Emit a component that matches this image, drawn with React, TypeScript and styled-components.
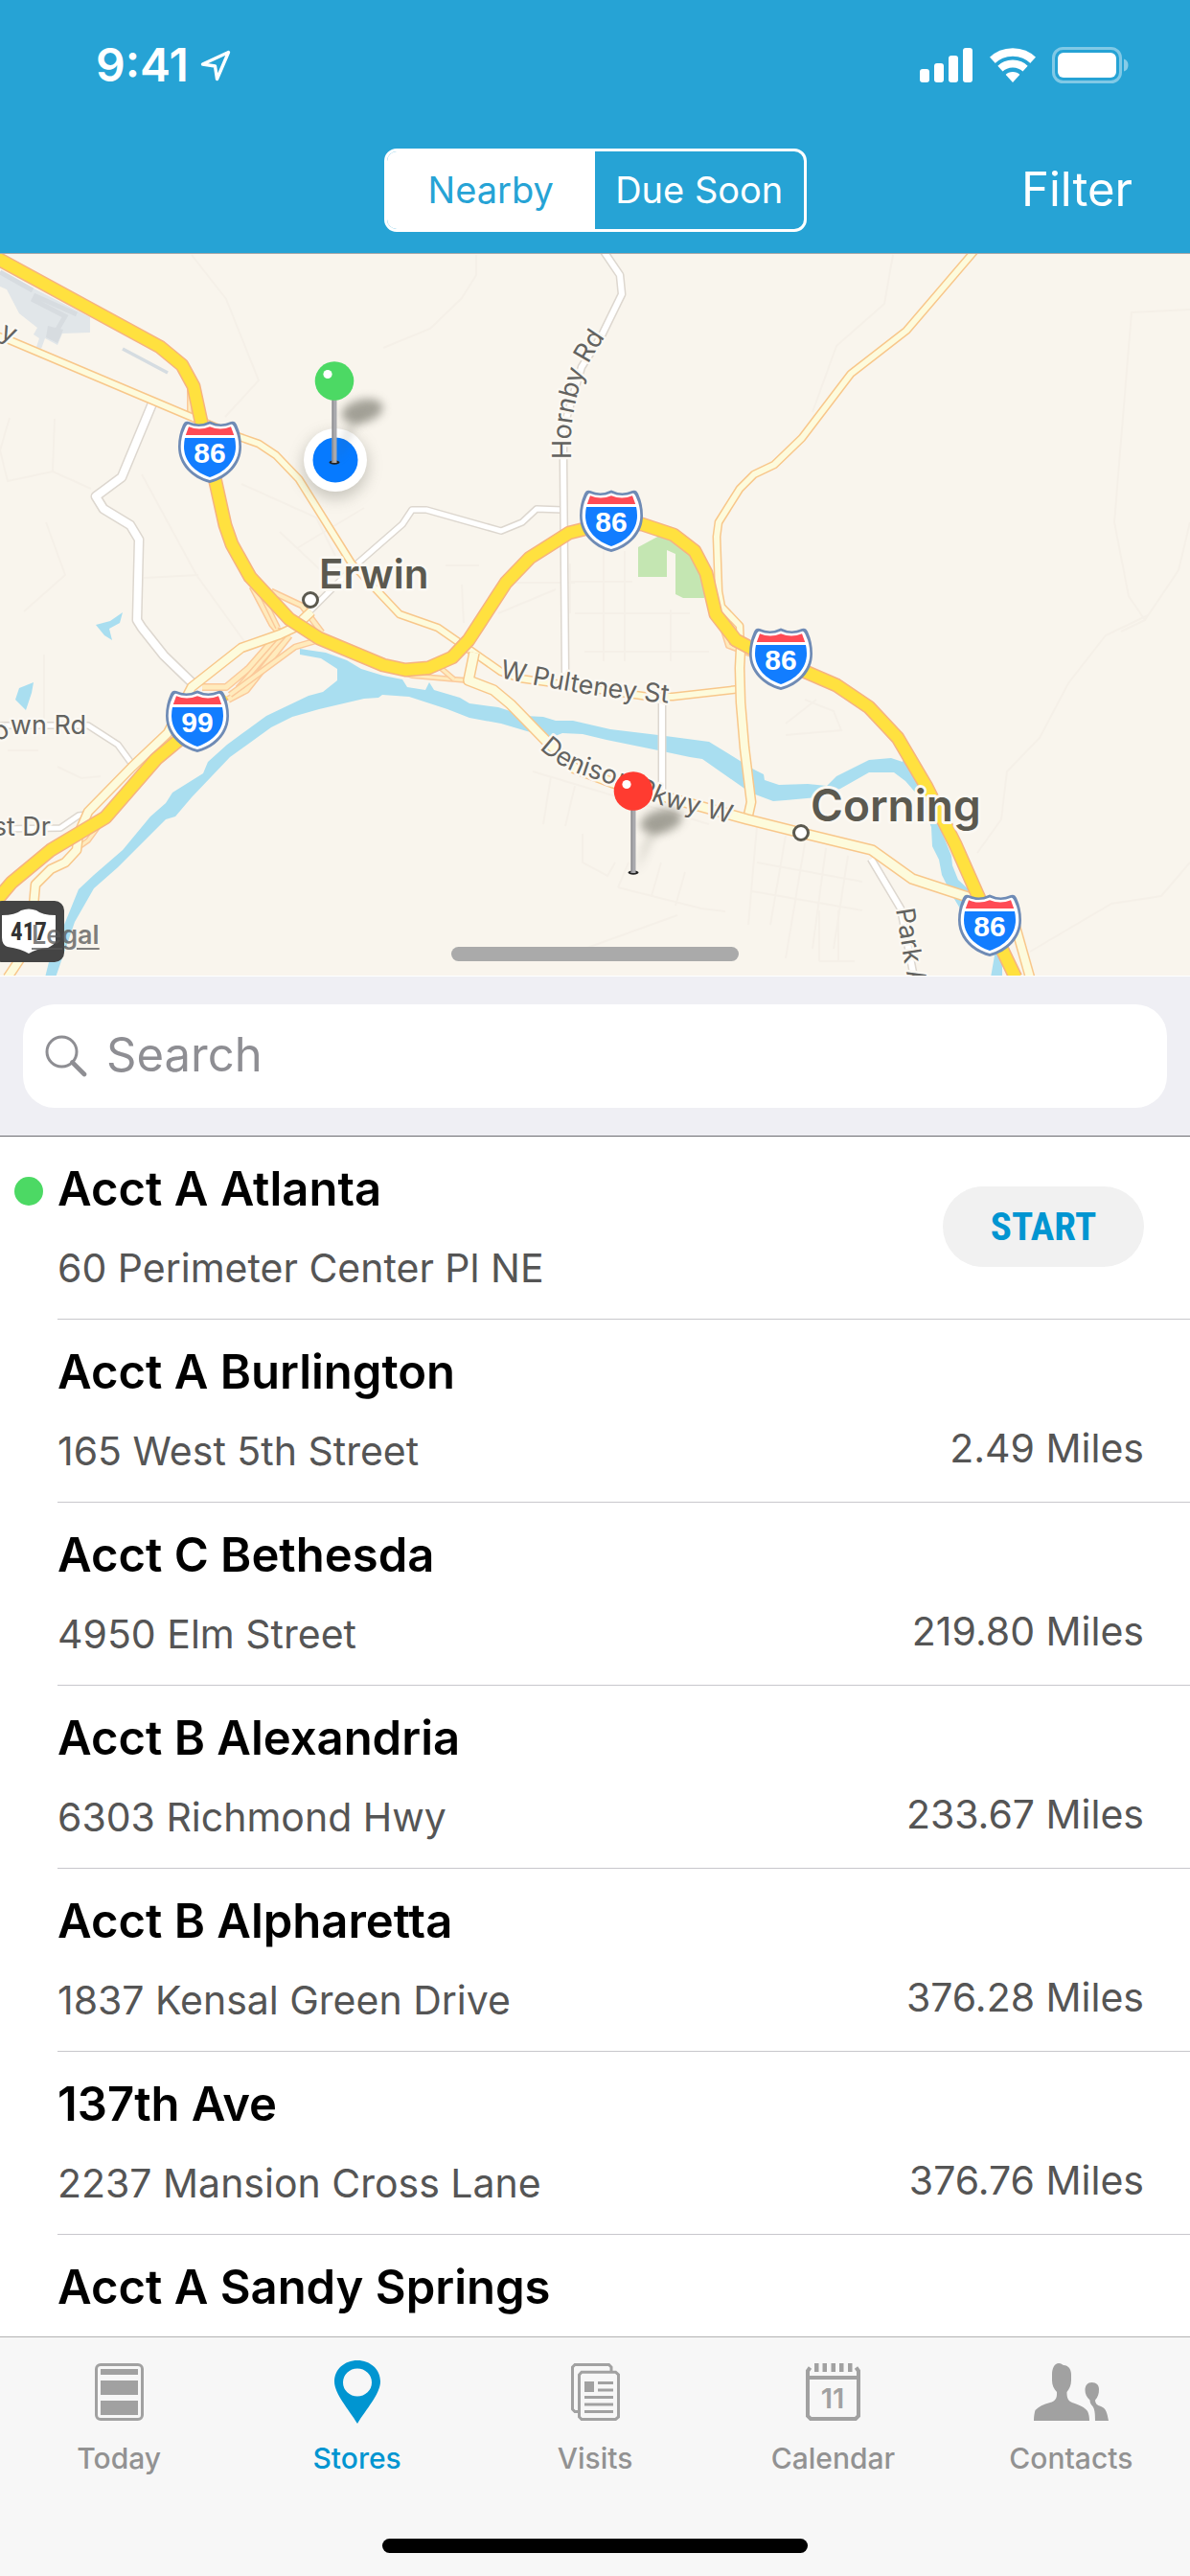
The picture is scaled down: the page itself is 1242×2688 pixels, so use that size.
import React, { useState } from "react";
import styled, { createGlobalStyle } from "styled-components";

const GlobalStyle = createGlobalStyle`
  *, *::before, *::after { box-sizing: border-box; }
  body {
    margin: 0;
    background: #fff;
    font-family: Inter, Roboto, "Liberation Sans", sans-serif;
    -webkit-font-smoothing: antialiased;
  }
  button, input { font: inherit; }
`;

const Screen = styled.div`
  display: flex;
  flex-direction: column;
  height: 100vh;
  min-height: 1600px;
  overflow: hidden;
`;

/* ---------- header ---------- */

const Header = styled.header`
  flex: none;
  background: #26a3d5;
  color: #fff;
`;

const StatusBar = styled.div`
  display: flex;
  align-items: center;
  justify-content: space-between;
  height: 132px;
  padding: 4px 64px 0 100px;
`;

const StatusGroup = styled.div<{ $gap: number }>`
  display: flex;
  align-items: center;
  gap: ${(p) => p.$gap}px;
`;

const Clock = styled.span`
  font-size: 48px;
  line-height: 60px;
  font-weight: 600;
`;

const NavBar = styled.div`
  display: grid;
  grid-template-columns: 1fr auto 1fr;
  align-items: center;
  height: 132px;
  padding: 0 60px;
`;

const Segmented = styled.div`
  grid-column: 2;
  display: flex;
  width: 441px;
  height: 87px;
  border: 3px solid #fff;
  border-radius: 13px;
  overflow: hidden;
`;

const Segment = styled.button<{ $active: boolean }>`
  flex: 1;
  padding: 0;
  border: 0;
  background: ${(p) => (p.$active ? "#fff" : "transparent")};
  color: ${(p) => (p.$active ? "#26a3d5" : "#fff")};
  font-size: 38px;
  white-space: nowrap;
`;

const FilterButton = styled.button`
  justify-self: end;
  padding: 0;
  border: 0;
  background: none;
  color: #fff;
  font-size: 49px;
  line-height: 60px;
`;

/* ---------- map ---------- */

const MapPanel = styled.section`
  position: relative;
  flex: none;
  border-bottom: 1px solid #fff;
`;

const MapCanvas = styled.svg`
  display: block;
  width: 100%;
  height: auto;
`;

const LegalLink = styled.a`
  position: absolute;
  left: 33px;
  bottom: 26px;
  color: rgba(85, 85, 85, 0.75);
  font-size: 27px;
  line-height: 32px;
  font-weight: 600;
  text-underline-offset: 4px;
`;

const Grabber = styled.div`
  position: absolute;
  left: 50%;
  bottom: 15px;
  width: 300px;
  height: 15px;
  margin-left: -150px;
  border-radius: 8px;
  background: #aaa;
`;

/* ---------- search ---------- */

const SearchBar = styled.form`
  flex: none;
  padding: 29px 24px;
  background: #efeff4;
  border-bottom: 1px solid #6c6c70;
`;

const SearchField = styled.label`
  display: flex;
  align-items: center;
  gap: 20px;
  height: 108px;
  padding: 0 22px 2px;
  border-radius: 33px;
  background: #fff;
`;

const SearchInput = styled.input`
  flex: 1;
  min-width: 0;
  padding: 0;
  border: 0;
  outline: 0;
  background: none;
  color: #000;
  font-size: 49px;
  line-height: 60px;
  &::placeholder { color: #8e8e93; opacity: 1; }
`;

/* ---------- list ---------- */

const List = styled.ul`
  flex: 1;
  min-height: 0;
  margin: 0;
  padding: 0;
  list-style: none;
  overflow-y: auto;
  scrollbar-width: none;
`;

const Row = styled.li`
  display: flex;
`;

const Gutter = styled.div`
  flex: none;
  display: flex;
  justify-content: center;
  width: 60px;
  padding-top: 42px;
`;

const ActiveDot = styled.span`
  width: 30px;
  height: 30px;
  border-radius: 50%;
  background: #4cd964;
`;

const RowBody = styled.div`
  flex: 1;
  display: flex;
  justify-content: space-between;
  padding: 25px 48px 28px 0;
  border-bottom: 1px solid #c8c7cc;
`;

const RowText = styled.div`
  display: flex;
  flex-direction: column;
  gap: 27px;
`;

const StoreName = styled.h2`
  margin: 0;
  color: #000;
  font-size: 49px;
  line-height: 60px;
  font-weight: 600;
`;

const Address = styled.p`
  margin: 0;
  color: #555;
  font-size: 41px;
  line-height: 50px;
`;

const Distance = styled.span`
  align-self: flex-end;
  padding-bottom: 3px;
  color: #555;
  font-size: 41px;
  line-height: 50px;
`;

const StartButton = styled.button`
  align-self: center;
  width: 210px;
  height: 84px;
  padding: 0;
  border: 0;
  border-radius: 42px;
  background: #f1f1f1;
  color: #0095d1;
  font-family: "Roboto Condensed", Roboto, "Liberation Sans", sans-serif;
  font-size: 41px;
  font-weight: 700;
`;

/* ---------- tab bar ---------- */

const TabBar = styled.footer`
  flex: none;
  display: flex;
  flex-direction: column;
  align-items: center;
  gap: 66px;
  padding: 21px 0 24px;
  border-top: 1px solid #b2b2b2;
  background: #f7f7f7;
`;

const Tabs = styled.nav`
  display: flex;
  width: 100%;
`;

const Tab = styled.a<{ $active: boolean }>`
  flex: 1;
  display: flex;
  flex-direction: column;
  align-items: center;
  gap: 15px;
  color: ${(p) => (p.$active ? "#0095d1" : "#929292")};
  font-size: 30px;
  line-height: 36px;
  font-weight: 500;
  text-decoration: none;
`;

const TabIcon = styled.span<{ $active: boolean }>`
  display: flex;
  align-items: center;
  height: 72px;
  color: ${(p) => (p.$active ? "#0095d1" : "#a1a1a1")};
`;

const HomeIndicator = styled.div`
  width: 444px;
  height: 15px;
  border-radius: 8px;
  background: #000;
`;

/* ---------- status icons ---------- */

const LocationArrow = () => (
  <svg width="32" height="33" viewBox="0 0 32 33" fill="none" stroke="#fff" strokeWidth="3.4" strokeLinejoin="round">
    <path d="M29.5 2.5 L2.5 15 L15.5 17 L17.5 30.5 Z" />
  </svg>
);

const SignalIcon = () => (
  <svg width="56" height="36" viewBox="0 0 56 36" fill="#fff">
    <rect x="0" y="22" width="10" height="14" rx="3" />
    <rect x="15" y="16" width="10" height="20" rx="3" />
    <rect x="30" y="8" width="10" height="28" rx="3" />
    <rect x="45" y="0" width="10" height="36" rx="3" />
  </svg>
);

const WifiIcon = () => (
  <svg width="50" height="36" viewBox="0 0 50 36">
    <defs>
      <clipPath id="wifi-wedge">
        <path d="M25 36 L-6 2 L-6 -10 L56 -10 L56 2 Z" />
      </clipPath>
    </defs>
    <g clipPath="url(#wifi-wedge)" fill="none" stroke="#fff">
      <circle cx="25" cy="36" r="31.5" strokeWidth="8.4" />
      <circle cx="25" cy="36" r="19.5" strokeWidth="7.8" />
      <circle cx="25" cy="36" r="5.5" strokeWidth="11" />
    </g>
  </svg>
);

const BatteryIcon = () => (
  <svg width="80" height="38" viewBox="0 0 80 38">
    <rect x="1.5" y="1.5" width="70" height="35" rx="10" fill="none" stroke="#fff" strokeOpacity="0.42" strokeWidth="3" />
    <rect x="6" y="6" width="61" height="26" rx="6" fill="#fff" />
    <path d="M75 12.5 q4.500 1.500 4.500 6.500 t-4.500 6.500 Z" fill="#fff" fillOpacity="0.45" />
  </svg>
);

const SearchIcon = () => (
  <svg width="45" height="45" viewBox="0 0 45 45" fill="none" stroke="#8e8e93" aria-hidden="true">
    <circle cx="18.500" cy="18.500" r="15.500" strokeWidth="3" />
    <path d="M29.500 29.500 L42 42" strokeWidth="4.600" strokeLinecap="round" />
  </svg>
);

/* ---------- tab icons ---------- */

const TodayIcon = () => (
  <svg width="51" height="60" viewBox="0 0 51 60" fill="currentColor">
    <rect x="1.500" y="1.500" width="48" height="57" rx="4.500" fill="none" stroke="currentColor" strokeWidth="3" />
    <rect x="6" y="6" width="39" height="6" />
    <rect x="6" y="18" width="39" height="15" />
    <rect x="6" y="39" width="39" height="15" />
  </svg>
);

const StoresIcon = () => (
  <svg width="48" height="66" viewBox="0 0 48 66" fill="currentColor">
    <path fillRule="evenodd" d="M24 0 C37.500 0 48 9.500 48 22 C48 35 33 51 24 66 C15 51 0 35 0 22 C0 9.500 10.500 0 24 0 Z M24 8.500 A15 14.500 0 1 0 24 37.500 A15 14.500 0 1 0 24 8.500 Z" />
  </svg>
);

const VisitsIcon = () => (
  <svg width="51" height="60" viewBox="0 0 51 60" fill="currentColor">
    <path d="M7 50.500 H4 L1.500 48 V4 L4 1.500 H39.500 L42 4 V9" fill="none" stroke="currentColor" strokeWidth="3" />
    <path d="M11 9.200 H46.500 L49.500 12 V56 L46.500 58.500 H11 L8.500 56 V12 Z" fill="none" stroke="currentColor" strokeWidth="3" />
    <rect x="14" y="19" width="10" height="11" />
    <rect x="28" y="19" width="16" height="3" />
    <rect x="28" y="26.500" width="16" height="3" />
    <rect x="14" y="34" width="30" height="3" />
    <rect x="14" y="41.500" width="30" height="3" />
    <rect x="14" y="49" width="30" height="3" />
  </svg>
);

const CalendarIcon = () => (
  <svg width="57" height="60" viewBox="0 0 57 60" fill="currentColor">
    <path d="M4.500 4.500 L2 8 V55 L5 58 H52 L55 55 V8 L52.500 4.500" fill="none" stroke="currentColor" strokeWidth="4" />
    <rect x="2" y="13" width="53" height="4" />
    {[9, 17.5, 26.5, 35, 44].map((x) => (
      <rect key={x} x={x} y="0" width="4.500" height="9" />
    ))}
    <text x="28" y="47" textAnchor="middle" fontSize="29" fontWeight="600" fontFamily="Inter, sans-serif">11</text>
  </svg>
);

const ContactsIcon = () => (
  <svg width="78" height="60" viewBox="0 0 78 60" fill="currentColor">
    <path d="M26 0 C28.500 0 29.500 1.500 31 2 C36 2.200 39 6 39 12 V18 C39 23 37 27 34.500 30 C34.300 36 36 39.500 40 41 C48 43.500 53 46 56 50 C57.500 53 58 56 58 60 H0 C0 56 0.500 52 1.500 49 C5 45.500 10 42.500 17 41 C22 39.500 24.500 37 24 30 C21 27 19 23 19 18 V12 C19 5 21.500 0 26 0 Z" />
    <path d="M60.500 20 C65.500 20 68 23 68 27 C68 32 67 35 64 38.500 C64 42 66 44 70 45 C75.500 47 76.500 52 78 60 H64 C64 52 63.500 48 61.500 45 C59.500 43 58.500 41 58.500 38.500 C55 35 53.500 32 53.500 28 C53.500 23 56 20 60.500 20 Z" />
  </svg>
);

/* ---------- map drawing ---------- */

type RoadProps = { d: string; width: number; casing: string; fill: string };

const roadSets: { casing: string; fill: string; roads: [string, number][] }[] = [
  {
    casing: "#ddd7cf",
    fill: "#ffffff",
    roads: [
      ["M159 421 L127 498 L100 518 L108 531 L136 548 L145 563 L143 647 L148 655 L171 684 L202 714", 8],
      ["M0 757 H92 L123 777 L139 799", 5],
      ["M0 865 L63 864 L82 851 L90 850", 5],
      ["M322 639 L373 588 L420 547 L430 532 L445 532 L523 554 L545 545 L560 531 L587 532", 5],
      ["M630 262 L647 287 L649 307 L628 350 L607 383 L588 447 L588 480 L590 702", 6],
      ["M691 734 V824", 6],
      ["M909 896 L940 948 L954 1020", 6],
    ],
  },
  {
    casing: "#fbc99a",
    fill: "#ffebbd",
    roads: [
      ["M198 404 V434", 3],
      ["M295 657 L260 697 L236 717 L211 717", 5],
      ["M302 663 L257 720 L238 730", 5],
      ["M299 660 L248 718", 3],
      ["M332 668 L308 675 L240 725", 4],
      ["M263 612 L284 652 L291 660", 4],
      ["M270 614 L290 655", 3],
      ["M283 617 L315 632 L336 660", 4],
      ["M400 696 L430 705 L487 710", 3],
      ["M460 697 L474 709", 3],
      ["M446 696 L470 683", 3],
      ["M755 658 L760 674 L784 683", 3],
      ["M82 884 L92 877 L108 855", 3],
    ],
  },
  {
    casing: "#f8c78b",
    fill: "#fdfbdc",
    roads: [
      ["M-4 350 L10 355 L204 437 L250 456 L270 463 L288 475 L312 500 L367 588 L417 641 L457 655 L493 680 L523 701 L543 708 L677 727 L702 727 L772 719", 6],
      ["M1017 262 L946 345 L888 390 L837 457 L808 485 L787 495 L772 510 L750 545 L748 560 L750 617 L753 633 L772 653 L773 677", 6],
      ["M773 677 L772 697 L773 733 L777 780 L784 837 L780 855", 8],
      ["M325 638 L307 655 L292 662 L252 676 L200 717 L175 765 L138 800 L92 847 L82 870 L80 887 L68 900 L53 907 L37 923 L35 945 L28 990 L8 1020", 8],
      ["M495 681 L489 710 L515 720 L533 735 L570 773 L600 802 L640 817 L733 842 L780 855 L836 869 L910 887 L952 917 L1007 935 L1040 946", 9],
      ["M1058 960 L1075 1020", 8],
    ],
  },
  {
    casing: "#f6b380",
    fill: "#ffe13f",
    roads: [
      ["M-4 269 L167 362 L190 381 L202 403 L210 440 L225 503 L235 548 L242 568 L261 602 L302 646 L333 666 L400 694 L423 699 L447 697 L472 686 L489 668 L528 608 L553 582 L572 570 L594 556 L638 545 L670 547 L703 558 L725 575 L737 598 L747 641 L768 668 L787 678 L843 702 L873 715 L907 738 L937 770 L967 821 L997 881 L1020 933 L1047 993 L1060 1020", 12],
      ["M-4 940 L12 921 L53 887 L110 853 L163 792 L187 772 L206 755", 12],
      ["M206 753 L236 727", 5],
    ],
  },
];

const Road = ({ d, width, casing, fill }: RoadProps) => (
  <g fill="none" strokeLinejoin="round" strokeLinecap="butt">
    <path d={d} stroke={casing} strokeWidth={width + 3} />
    <path d={d} stroke={fill} strokeWidth={width} />
  </g>
);

const RIVER =
  "M313 677 L340 681 L362 689 L377 698 L400 705 L420 709 L425 717 L444 720 L448 712 L453 720 L480 728 L490 734 L520 738 L548 747 L567 748 L580 752 L598 752 L637 761 L687 767 L740 774 L758 785 L787 803 L797 808 L798 814 L813 819 L843 818 L863 820 L873 810 L907 793 L930 791 L942 795 L943 789 L966 826 L993 893 L994 903 L1000 918 L1013 930 L1046 990 L1046 1020 L1034 1020 L1038 997 L1002 948 L993 933 L983 913 L980 897 L973 883 L972 863 L958 830 L945 815 L933 806 L907 806 L877 823 L853 832 L820 835 L807 836 L783 827 L733 792 L720 790 L687 783 L633 772 L608 766 L587 765 L577 769 L570 768 L550 763 L523 755 L490 749 L467 740 L427 727 L399 725 L395 728 L380 729 L333 740 L305 748 L283 759 L240 790 L200 832 L183 852 L173 855 L123 905 L98 927 L78 962 L58 1020 L47 1020 L52 1000 L67 965 L82 928 L98 913 L128 887 L157 852 L173 838 L180 827 L212 807 L217 795 L237 777 L278 747 L322 726 L337 722 L352 710 L352 698 L335 687 L313 683 Z";

const MINOR_STREETS =
  "M200 266 L236 312 L270 397 L235 435 M497 266 V287 L482 311 L449 343 L400 363 M932 266 L923 317 L873 361 L848 430 M1242 323 L1181 326 L1163 545 L1178 622 L1195 647 L1170 659 M1242 545 L1230 595 L1195 647 M1198 642 L1154 663 L1115 713 L1085 770 L1051 805 L1045 855 L1020 890 M1242 900 L1212 935 L1160 943 L1075 993 M10 436 L0 470 L8 502 L55 492 L57 437 M55 492 L95 510 M148 495 L205 600 L257 672 M150 603 L207 600 M48 545 L68 600 L25 638 M46 683 V760 M8 783 H40 M60 800 L85 812 L105 810 M252 505 L330 540 L350 580 M292 555 L340 600 M310 572 L380 530 M465 590 H500 M482 610 L484 650 M528 608 H600 M520 640 L580 615 M595 588 V640 M630 575 V690 M652 575 V690 M595 607 H660 M600 640 H720 M610 680 H740 M700 636 V690 M556 805 L740 860 M575 810 L567 860 M600 820 L590 862 M608 870 V900 L634 914 L642 900 M656 900 L645 926 M645 926 L732 948 L757 951 M690 900 L680 935 M715 910 L705 945 M707 955 L610 990 M790 862 L781 965 M820 872 L804 965 M840 880 L820 1000 M862 885 L848 990 M885 893 L870 990 M790 900 L900 920 M785 930 L900 950 M855 950 V1003 M875 950 V1003 M855 1003 H892 M840 730 L870 742 L878 762 L820 767 M820 755 L852 730";

const Interstate = ({ x, y, label }: { x: number; y: number; label: string }) => (
  <g transform={`translate(${x} ${y})`}>
    <path d="M11 1 Q22 6 33 0.500 Q44 6 55 1 Q59 -0.500 61 4 Q66 15 66 27 C66 46 52 60 33 65 C14 60 0 46 0 27 Q0 15 5 4 Q7 -0.500 11 1 Z" fill="#6f8bb5" />
    <path d="M10.500 3.800 Q22 8.500 33 3.500 Q44 8.500 55.500 3.800 Q57.500 4 59 8 Q63.300 17 63.300 27 C63.300 44 50 57.500 33 62 C16 57.500 2.700 44 2.700 27 Q2.700 17 7 8 Q8.500 4 10.500 3.800 Z" fill="#fff" />
    <path d="M11 6.200 Q22 11 33 6.200 Q44 11 55 6.200 L58.200 15 H7.800 Z" fill="#ff4b55" />
    <path d="M7 18 H59 Q60 22 60 27 C60 43 48 54 33 59 C18 54 6 43 6 27 Q6 22 7 18 Z" fill="#127dff" />
    <text x="33" y="44" textAnchor="middle" fill="#fff" fontSize="30" fontWeight="700" fontFamily="Liberation Sans, sans-serif">{label}</text>
  </g>
);

const Pin = ({ x, y, color }: { x: number; y: number; color: string }) => (
  <g transform={`translate(${x} ${y})`}>
    <path d="M3 0 L10 -30 L18 -44 L34 -52 L20 -34 Z" fill="#55554a" opacity="0.2" filter="url(#soft)" />
    <ellipse cx="29" cy="-54" rx="22" ry="12" transform="rotate(-14 29 -54)" fill="#55554a" opacity="0.52" filter="url(#soft)" />
    <ellipse cx="0" cy="-0.500" rx="5.500" ry="2.200" fill="#222" />
    <rect x="-2.500" y="-68" width="5" height="68" fill="#a9a9ad" />
    <rect x="-2.500" y="-68" width="1.500" height="68" fill="#8e8e92" />
    <circle cx="0" cy="-85.500" r="20.300" fill={color} />
    <circle cx="-7" cy="-92.500" r="4.600" fill="#fff" />
  </g>
);

const RoadLabel = styled.text`
  fill: #636360;
  stroke: #fbf8f2;
  stroke-width: 5px;
  stroke-linejoin: round;
  paint-order: stroke;
  font-size: 27px;
`;

const CityLabel = styled.text<{ $size: number }>`
  fill: #5b594f;
  stroke: #fbf8f2;
  stroke-width: 6px;
  stroke-linejoin: round;
  paint-order: stroke;
  font-size: ${(p) => p.$size}px;
  font-weight: 600;
`;

const AreaMap = () => (
  <MapCanvas viewBox="0 264 1242 754" role="img" aria-label="Map of stores near Erwin and Corning">
    <defs>
      <filter id="soft" x="-60%" y="-100%" width="220%" height="300%">
        <feGaussianBlur stdDeviation="5" />
      </filter>
      <filter id="halo" x="-50%" y="-50%" width="200%" height="200%">
        <feGaussianBlur stdDeviation="8" />
      </filter>
      <path id="hornby" d="M596 479 L596 452 Q598 425 607 397 Q613 376 640 340" />
      <path id="pulteney" d="M521 707 Q590 722 640 728 L720 736" />
      <path id="denison" d="M563 781 Q580 798 603 807 L645 821 L690 840 L790 867" />
      <path id="park" d="M935 949 L944 1005 L960 1080" />
      <path id="town" d="M-3 774 L13 766 L120 766" />
    </defs>
    <rect x="0" y="264" width="1242" height="754" fill="#f9f5ed" />
    <path d={MINOR_STREETS} fill="none" stroke="#f5f0e8" strokeWidth="2" />
    <path d="M0 283 L94 331 V347 L65 348 L60 360 L47 353 L43 364 L38 362 L41 353 L35 349 L39 342 L20 327 L7 302 L0 299 Z" fill="#e1e6e9" />
    <path d="M35 308 L80 328 M55 352 L68 330 L33 312 M0 284 L34 303" fill="none" stroke="#d7dce0" strokeWidth="5" />
    <path d="M50 340 L66 344 L60 358 L48 352 Z" fill="#d7dce0" />
    <path d="M128 364 L175 389" stroke="#d5dce1" strokeWidth="3.500" />
    <path d="M666 571 L690 558 L725 575 L737 600 L735 624 H713 L705 620 V578 L696 574 V602 H666 Z" fill="#c4e6b2" />
    <path d={RIVER} fill="#a9def0" />
    <path d="M100 652 L115 648 L128 639 L125 650 L114 656 L117 668 L109 663 Z M20 718 L35 712 L33 723 L27 741 L16 730 Z" fill="#a9def0" />
    {roadSets.map((set) => (
      <g key={set.fill}>
        {set.roads.map(([d, width]) => (
          <Road key={d} d={d} width={width} casing={set.casing} fill={set.fill} />
        ))}
      </g>
    ))}

    <RoadLabel><textPath href="#hornby">Hornby Rd</textPath></RoadLabel>
    <RoadLabel><textPath href="#pulteney">W Pulteney St</textPath></RoadLabel>
    <RoadLabel><textPath href="#denison">Denison Pkwy W</textPath></RoadLabel>
    <RoadLabel><textPath href="#park">Park Ave</textPath></RoadLabel>
    <RoadLabel><textPath href="#town">own Rd</textPath></RoadLabel>
    <RoadLabel x="53" y="872" textAnchor="end">st Dr</RoadLabel>
    <RoadLabel transform="translate(-1 352) rotate(24)">y</RoadLabel>

    <circle cx="324" cy="626" r="7.500" fill="#fff" stroke="#5b594f" strokeWidth="3" />
    <circle cx="836" cy="869" r="7.500" fill="#fff" stroke="#5b594f" strokeWidth="3" />
    <CityLabel $size={42} x="333" y="614">Erwin</CityLabel>
    <CityLabel $size={46} x="846" y="857">Corning</CityLabel>

    <Interstate x={186} y={439} label="86" />
    <Interstate x={605} y={511} label="86" />
    <Interstate x={782} y={655} label="86" />
    <Interstate x={1000} y={933} label="86" />
    <Interstate x={173} y={720} label="99" />

    <rect x="-8" y="940" width="75" height="64" rx="10" fill="#444" />
    <path d="M2 955 Q16 955 22 950 Q30 947 38 950 Q44 955 58 955 V983 Q56 986 50 989 Q38 990 30 995 Q22 990 8 988 Q2 986 2 978 Z" fill="#fff" />
    <text x="30" y="981" textAnchor="middle" fill="#333" fontSize="25" fontWeight="700" fontFamily="Roboto Condensed, Roboto, sans-serif">417</text>

    <circle cx="350" cy="486" r="34" fill="#6b6b60" opacity="0.35" filter="url(#halo)" />
    <circle cx="350" cy="480" r="33" fill="#fff" />
    <circle cx="350" cy="480" r="23.500" fill="#067aff" />
    <Pin x={349} y={483} color="#4cd964" />
    <Pin x={661} y={911} color="#ff3b30" />
    <rect x="0" y="264" width="1242" height="1" fill="#a9a9a9" />
  </MapCanvas>
);

/* ---------- data ---------- */

type Store = { name: string; address: string; miles?: string };

const stores: Store[] = [
  { name: "Acct A Atlanta", address: "60 Perimeter Center Pl NE" },
  { name: "Acct A Burlington", address: "165 West 5th Street", miles: "2.49" },
  { name: "Acct C Bethesda", address: "4950 Elm Street", miles: "219.80" },
  { name: "Acct B Alexandria", address: "6303 Richmond Hwy", miles: "233.67" },
  { name: "Acct B Alpharetta", address: "1837 Kensal Green Drive", miles: "376.28" },
  { name: "137th Ave", address: "2237 Mansion Cross Lane", miles: "376.76" },
  { name: "Acct A Sandy Springs", address: "" },
];

const tabs = [
  { label: "Today", Icon: TodayIcon },
  { label: "Stores", Icon: StoresIcon },
  { label: "Visits", Icon: VisitsIcon },
  { label: "Calendar", Icon: CalendarIcon },
  { label: "Contacts", Icon: ContactsIcon },
];

export default function App() {
  const [segment, setSegment] = useState("Nearby");
  const [query, setQuery] = useState("");
  const visible = stores.filter((s) => s.name.toLowerCase().includes(query.toLowerCase()));

  return (
    <Screen>
      <GlobalStyle />
      <Header>
        <StatusBar>
          <StatusGroup $gap={12}>
            <Clock>9:41</Clock>
            <LocationArrow />
          </StatusGroup>
          <StatusGroup $gap={16}>
            <SignalIcon />
            <WifiIcon />
            <BatteryIcon />
          </StatusGroup>
        </StatusBar>
        <NavBar>
          <Segmented role="group" aria-label="Store list">
            {["Nearby", "Due Soon"].map((label) => (
              <Segment
                key={label}
                type="button"
                $active={segment === label}
                aria-pressed={segment === label}
                onClick={() => setSegment(label)}
              >
                {label}
              </Segment>
            ))}
          </Segmented>
          <FilterButton type="button">Filter</FilterButton>
        </NavBar>
      </Header>

      <MapPanel>
        <AreaMap />
        <LegalLink href="#legal">Legal</LegalLink>
        <Grabber />
      </MapPanel>

      <SearchBar role="search" onSubmit={(e: React.FormEvent) => e.preventDefault()}>
        <SearchField>
          <SearchIcon />
          <SearchInput
            type="text"
            aria-label="Search"
            placeholder="Search"
            value={query}
            onChange={(e: React.ChangeEvent<HTMLInputElement>) => setQuery(e.target.value)}
          />
        </SearchField>
      </SearchBar>

      <List>
        {visible.map((store) => (
          <Row key={store.name}>
            <Gutter>{store === stores[0] && <ActiveDot />}</Gutter>
            <RowBody>
              <RowText>
                <StoreName>{store.name}</StoreName>
                {store.address && <Address>{store.address}</Address>}
              </RowText>
              {store === stores[0] && <StartButton type="button">START</StartButton>}
              {store.miles && <Distance>{store.miles} Miles</Distance>}
            </RowBody>
          </Row>
        ))}
      </List>

      <TabBar>
        <Tabs>
          {tabs.map(({ label, Icon }) => (
            <Tab
              key={label}
              href={`#${label.toLowerCase()}`}
              $active={label === "Stores"}
              aria-current={label === "Stores" ? "page" : undefined}
            >
              <TabIcon $active={label === "Stores"}>
                <Icon />
              </TabIcon>
              {label}
            </Tab>
          ))}
        </Tabs>
        <HomeIndicator />
      </TabBar>
    </Screen>
  );
}
